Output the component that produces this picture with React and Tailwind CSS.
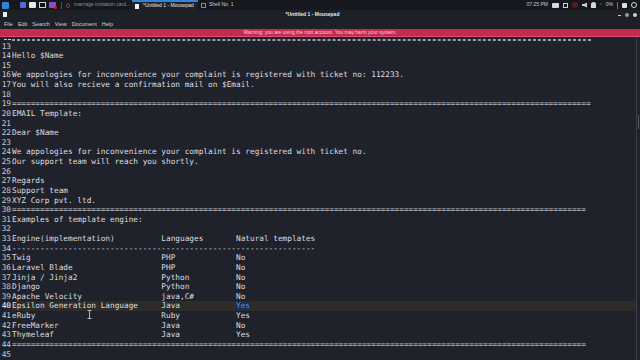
const eq = (n) => "=".repeat(n);

const pad = (s, n) => s + " ".repeat(Math.max(0, n - s.length));
const row3 = (a, b, c) => pad(a, 32) + pad(b, 16) + c;

const lines = [
  [13, ""],
  [14, "Hello $Name"],
  [15, ""],
  [16, "We appologies for inconvenience your complaint is registered with ticket no: 112233."],
  [17, "You will also recieve a confirmation mail on $Email."],
  [18, ""],
  [19, eq(124)],
  [20, "EMAIL Template:"],
  [21, ""],
  [22, "Dear $Name"],
  [23, ""],
  [24, "We appologies for inconvenience your complaint is registered with ticket no."],
  [25, "Our support team will reach you shortly."],
  [26, ""],
  [27, "Regards"],
  [28, "Support team"],
  [29, "XYZ Corp pvt. ltd."],
  [30, eq(123)],
  [31, "Examples of template engine:"],
  [32, ""],
  [33, row3("Engine(implementation)", "Languages", "Natural templates")],
  [34, "-".repeat(65)],
  [35, row3("Twig", "PHP", "No")],
  [36, row3("Laravel Blade", "PHP", "No")],
  [37, row3("Jinja / Jinja2", "Python", "No")],
  [38, row3("Django", "Python", "No")],
  [39, row3("Apache Velocity", "java,C#", "No")],
  [40, null],
  [41, row3("eRuby", "Ruby", "Yes")],
  [42, row3("FreeMarker", "Java", "No")],
  [43, row3("Thymeleaf", "Java", "Yes")],
  [44, eq(123)],
  [45, ""],
];

const TopPanel = () => (
  <div className="h-[10px] bg-[#16181d] flex items-center text-[5px] text-[#c9ccd2] whitespace-nowrap font-['Liberation_Sans',sans-serif]">
    <div className="w-[7px] h-[7px] ml-[2px] bg-[#2f86d6] rounded-[1px] shrink-0"></div>
    <div className="flex items-center gap-[2px] ml-[11px] shrink-0">
      <div className="w-[6px] h-[6px] bg-[#4a6fd6] rounded-[1px]"></div>
      <div className="w-[7px] h-[6px] bg-[#e8e8ee] rounded-[1px] ml-[1px]"></div>
      <div className="w-[7px] h-[6px] border border-[#d0d0d0] bg-[#111] ml-[1px]"></div>
      <div className="w-[7px] h-[6px] bg-[#8a4fd0] rounded-[1px] ml-[1px] relative">
        <div className="absolute right-[-1px] bottom-[-1px] w-[3px] h-[3px] rounded-full bg-[#d02020]"></div>
      </div>
      <div className="w-[1px] h-[7px] bg-[#555] ml-[3px]"></div>
    </div>
    <div className="flex items-center ml-[4px] text-[#8d9098] w-[66px] shrink-0">
      <div className="w-[4px] h-[5px] border border-[#7a4040] rounded-full"></div>
      <span className="ml-[4px]">marriage invitation card...</span>
    </div>
    <div className="flex items-center h-full px-[3px] bg-[#1f2228] border-t-2 border-[#2f86d6] w-[66px] shrink-0">
      <div className="w-[4px] h-[5px] bg-[#f0f0f0]"></div>
      <span className="ml-[4px] text-[#e6e6e6]">*Untitled 1 - Mousepad</span>
    </div>
    <div className="flex items-center ml-[3px] shrink-0">
      <div className="w-[5px] h-[5px] border border-[#888]"></div>
      <span className="ml-[3px]">Shell No. 1</span>
    </div>
    <div className="ml-auto flex items-center gap-[4px] mr-[3px]">
      <span>07:25 PM</span>
      <div className="w-[7px] h-[5px] bg-[#d8d8d8] rounded-[1px]"></div>
      <div className="w-[5px] h-[5px] border border-[#cfcfcf]"></div>
      <div className="w-[6px] h-[6px] rounded-full bg-[#5a1a1e]"></div>
      <div className="w-[5px] h-[5px] bg-[#cfcfcf] [clip-path:polygon(0_30%,40%_30%,100%_0,100%_100%,40%_70%,0_70%)]"></div>
      <div className="w-[5px] h-[6px] bg-[#d8d8d8] rounded-t-full"></div>
      <span className="text-[#888]">▫</span>
      <span>0%</span>
      <div className="w-[1px] h-[7px] bg-[#777]"></div>
      <div className="w-[5px] h-[5px] bg-[#e0e0e0] rounded-[1px] mt-[1px]"></div>
      <div className="w-[6px] h-[6px] rounded-full border border-[#d8d8d8]"></div>
    </div>
  </div>
);

const TitleBar = () => (
  <div className="h-[9px] bg-[#1d2026] flex items-center text-[5px] font-['Liberation_Sans',sans-serif]">
    <div className="w-[4px] h-[5px] bg-[#eee] ml-[3px]"></div>
    <span className="flex-1 text-center text-[#e8e8e8] font-bold">*Untitled 1 - Mousepad</span>
    <div className="flex items-center gap-[4px] mr-[3px]">
      <div className="w-[3px] h-[1px] bg-[#cfcfcf] mt-[2px]"></div>
      <div className="w-[4px] h-[4px] rounded-full bg-[#9a9a9a]"></div>
      <div className="w-[4px] h-[4px] rounded-full bg-[#cfcfcf]"></div>
    </div>
  </div>
);

const MenuBar = () => (
  <div className="h-[10px] bg-[#1d2026] flex items-center gap-[5px] pl-[4px] text-[5.5px] text-[#d0d2d6] font-['Liberation_Sans',sans-serif]">
    {["File", "Edit", "Search", "View", "Document", "Help"].map((m) => (
      <span key={m}>{m}</span>
    ))}
  </div>
);

const Warning = () => (
  <div className="h-[8px] bg-[#c42a52] border-b border-[#e04a70] flex items-center justify-center text-[5px] text-[#f6d6de] font-['Liberation_Sans',sans-serif]">
    Warning: you are using the root account. You may harm your system.
  </div>
);

const Line = ({ n, text }) => {
  const current = n === 40;
  return (
    <div className="flex h-[9.625px] items-center">
      <div className={"w-[12px] pr-[1px] text-right shrink-0 " + (current ? "text-white" : "text-[#c9cbd0]")}>{n}</div>
      <div className={"flex-1 whitespace-pre h-full flex items-center " + (current ? "bg-[#2d2c29]" : "")}>
        {current ? (
          <>
            <span>{row3("Epsilon Generation Language", "Java", "")}</span>
            <span className="bg-[#1d2f4d] text-[#5d8fd6]">Yes</span>
          </>
        ) : (
          <span className={text && text[0] === "=" ? "text-[#b9bbc0]" : ""}>{text}</span>
        )}
      </div>
    </div>
  );
};

const App = () => {
  return (
    <div className="w-[640px] h-[360px] overflow-hidden bg-[#1f222b] flex flex-col">
      <TopPanel />
      <TitleBar />
      <MenuBar />
      <Warning />
      <div className="flex-1 flex overflow-hidden relative">
        <div className="flex-1 overflow-hidden font-['DejaVu_Sans_Mono',monospace] text-[7.75px] leading-[9.625px] text-[#dcdde0]">
          {/* line 12 only shows its lower edge under the warning bar */}
          <div className="h-[4.6px] flex items-end overflow-hidden">
            <div className="w-[12px] h-[3px] shrink-0 flex justify-end pr-[1px] gap-[1px] items-start">
              <div className="w-[3px] h-[1px] bg-[#c9cbd0]"></div>
              <div className="w-[3px] h-[1px] bg-[#c9cbd0]"></div>
            </div>
            <div className="w-[579px] h-[2px] mb-[1px] border-y border-dashed border-[#9a9ca2]"></div>
          </div>
          {lines.map(([n, t]) => (
            <Line key={n} n={n} text={t} />
          ))}
        </div>
        <div className="w-[4px] border-l border-[#3a3d45] flex flex-col">
          <div className="mt-[78px] h-[14px] mx-[1px] bg-[#5a5d66] rounded-full"></div>
        </div>
        <svg className="absolute left-[87px] top-[273px]" width="5" height="9" viewBox="0 0 5 9">
          <path d="M0.5 0.5h4M2.5 0.5v8M0.5 8.5h4" stroke="#dddddd" strokeWidth="0.8" fill="none" />
        </svg>
      </div>
    </div>
  );
};

export default App;
